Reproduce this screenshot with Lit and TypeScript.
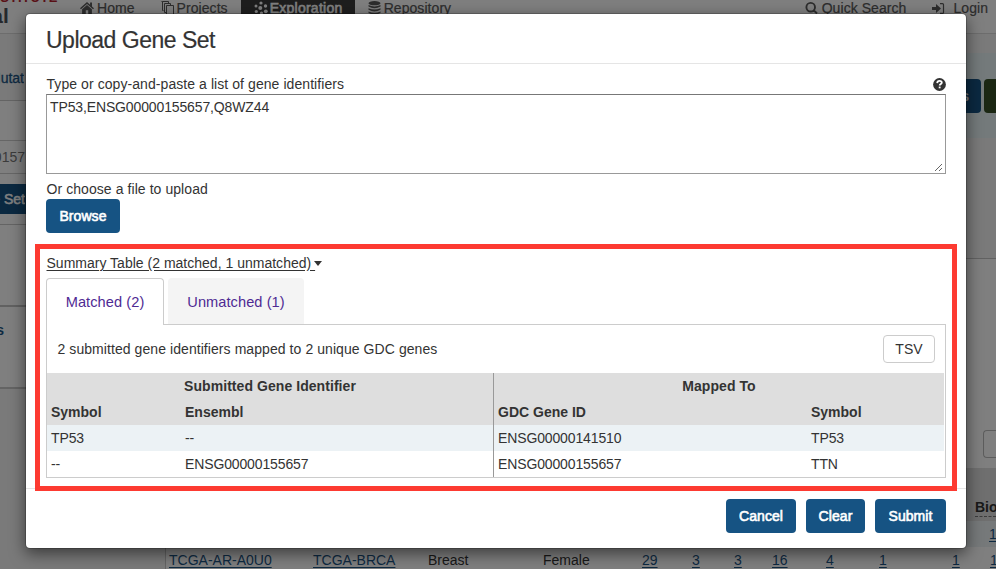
import { LitElement, html, css, svg } from "lit";
import { customElement } from "lit/decorators.js";

const base = css`
  * { box-sizing: border-box; }
  svg { display: block; flex: none; }
`;

const house = svg`<path d="M8 1.200 0 8.200l1.100 1.200L8 3.400l6.900 6L16 8.200l-2.300-2V1.800h-2.200v2.500zM8 4.500 2.400 9.400V15h4.200v-4.300h2.800V15h4.200V9.400z"/>`;

@customElement("site-header")
class SiteHeader extends LitElement {
  static styles = [base, css`
    :host { display: flex; height: 34px; background: #fff; border-bottom: 1px solid #dadada; color: #5a5a5a; font-size: 14px; letter-spacing: 0.06px; overflow: hidden; }
    .brand { width: 65px; height: 33px; position: relative; font-weight: bold; }
    .inst { position: absolute; right: 7px; top: -10px; font-size: 13px; line-height: 16px; letter-spacing: 0.5px; color: #b5232f; }
    .portal { position: absolute; left: -55px; top: 4px; font-size: 21px; line-height: 24px; color: #4a5058; width: 64px; text-align: right; }
    .item { display: flex; align-items: center; height: 33px; padding: 0 15px; margin-top: -9px; gap: 3px; -webkit-text-stroke: 0.2px currentColor; }
    .projects { padding: 0 13px 0 11px; }
    .active { background: #3c3c3c; color: #fff; width: 114px; padding: 0 0 8px 13px; gap: 2px; letter-spacing: 0.25px; -webkit-text-stroke: 0.6px currentColor; height: 42px; }
    .repo { padding: 0 13px; }
    .right { margin-left: auto; display: flex; }
    .search { padding-right: 14px; gap: 4px; }
    .login { padding: 0 8px 0 12px; gap: 8px; }
    svg { fill: currentColor; }
  `];
  render() {
    return html`
      <div class="brand"><span class="inst">INSTITUTE</span><span class="portal">Portal</span></div>
      <div class="item"><svg width="14" height="14" viewBox="0 0 16 16">${house}</svg>Home</div>
      <div class="item projects"><svg width="13" height="14" viewBox="0 0 13 14"><path fill="none" stroke="currentColor" d="M5.500 4.500h7v9h-7zM3.500 11.500v-9h6v1.500M3.500 11.500h1.500M1.500 9.500h1M1.500 9.500v-9h6v1.500M.5 .5h1"/></svg>Projects</div>
      <div class="item active"><svg width="14" height="14" viewBox="0 0 14 14"><circle cx="7" cy="2" r="1.600"/><circle cx="2" cy="5" r="1.500"/><circle cx="6.300" cy="7" r="2"/><circle cx="11.500" cy="5" r="1.700"/><circle cx="2.300" cy="10.500" r="1.600"/><circle cx="7.500" cy="12" r="1.600"/><circle cx="11.800" cy="10.300" r="1.900"/></svg>Exploration</div>
      <div class="item repo"><svg width="13" height="14" viewBox="0 0 13 14"><ellipse cx="6.500" cy="2.200" rx="6" ry="2.100"/><path d="M.5 4q6 2.800 12 0v1.600q-6 3.200-12 0zM.5 7.200q6 2.800 12 0v1.600q-6 3.200-12 0zM.5 10.400q6 2.800 12 0V12q-6 3.200-12 0z"/></svg>Repository</div>
      <div class="right">
        <div class="item search"><svg width="13" height="14" viewBox="0 0 13 14"><path fill="none" stroke="currentColor" stroke-width="1.900" d="M10 6.200a4.300 4.300 0 1 1-8.600 0 4.300 4.300 0 0 1 8.600 0M9 9.500l3 3"/></svg>Quick Search</div>
        <div class="item login"><svg width="13" height="14" viewBox="0 0 13 14"><path d="M0 6h4V3l5 4.500L4 12V9H0z"/><path fill="none" stroke="currentColor" stroke-width="1.200" d="M8 2.600h2.500q1 0 1 1v7.800q0 1-1 1H8"/></svg>Login</div>
      </div>`;
  }
}

@customElement("facet-rail")
class FacetRail extends LitElement {
  static styles = [base, css`
    :host { display: flex; flex-direction: column; width: 165px; height: 535px; background: #f4f4f4; font-size: 14px; overflow: hidden; }
    .tabs { height: 67px; padding-top: 35px; line-height: 18px; border-bottom: 1px solid #c8c8c8; color: #1c5585; -webkit-text-stroke: 0.3px currentColor; }
    .gap { height: 40px; background: #fff; border-bottom: 1px solid #ccc; }
    .field { height: 33px; line-height: 32px; background: #fff; border-bottom: 1px solid #ccc; color: #777; }
    .pad { height: 51px; background: #fff; border-bottom: 1px solid #c8c8c8; padding-top: 10px; }
    .set { height: 30px; line-height: 31px; background: #165383; color: #fff; -webkit-text-stroke: 0.5px currentColor; }
    .block { height: 82px; background: #fff; border-bottom: 2px solid #c2c2c2; flex: none; }
    .next { height: 82px; padding-top: 14px; line-height: 18px; background: #fff; border-bottom: 2px solid #c8c8c8; color: #1c5585; font-weight: bold; }
    .clip { display: flex; justify-content: flex-end; overflow: hidden; white-space: nowrap; width: 25px; }
    .clip.w { width: 24px; }
    .clip.s { width: 4px; }
  `];
  render() {
    return html`
      <div class="tabs"><div class="clip w">Mutat</div></div>
      <div class="gap"></div>
      <div class="field"><div class="clip">00000157</div></div>
      <div class="pad"><div class="set"><div class="clip">Gene Set</div></div></div>
      <div class="block"></div>
      <div class="next"><div class="clip s">Biotypes</div></div>`;
  }
}

const caseRow: [string, number, boolean][] = [
  ["TCGA-AR-A0U0", 144, true], ["TCGA-BRCA", 115, true], ["Breast", 115, false], ["Female", 99, false],
  ["29", 50, true], ["3", 42, true], ["3", 38, true], ["16", 54, true], ["4", 53, true], ["1", 73, true], ["1", 38, true], ["1", 20, true],
];

@customElement("cases-panel")
class CasesPanel extends LitElement {
  static styles = [base, css`
    :host { display: flex; flex-direction: column; flex: 1; min-width: 0; height: 535px; background: #f4f4f4; font-size: 14px; overflow: hidden; color: #333; }
    .bar { height: 85px; margin-top: 19px; background: #e8f5f6; display: flex; justify-content: flex-end; align-items: flex-start; gap: 3px; padding-top: 26px; flex: none; }
    .save { width: 60px; height: 34px; line-height: 34px; border-radius: 4px; background: #165383; color: #fff; text-align: right; padding-right: 12px; font-weight: bold; }
    .more { width: 12px; height: 34px; border-radius: 4px 0 0 4px; background: #364f27; }
    .head { height: 121px; border-bottom: 1px solid #c4c4c4; flex: none; }
    .card { background: #fff; border-left: 1px solid #c8c8c8; flex: 1; display: flex; flex-direction: column; }
    .tools { height: 209px; display: flex; justify-content: flex-end; align-items: flex-end; padding-bottom: 10px; flex: none; }
    .btn { width: 13px; height: 28px; border: 1px solid #bbb; border-right: 0; border-radius: 4px 0 0 4px; }
    .th { height: 53px; background: #dedede; display: flex; justify-content: flex-end; padding-top: 30px; font-weight: bold; flex: none; }
    .th span { width: 21px; height: 19px; line-height: 18px; border-bottom: 1px dashed #777; overflow: hidden; }
    .row { height: 26px; line-height: 26px; display: flex; flex: none; white-space: nowrap; padding-left: 3px; }
    .alt { background: #ecf3f5; justify-content: flex-end; }
    .row span { flex: none; }
    .link { color: #1c5585; text-decoration: underline; text-underline-offset: 2px; }
    .last { width: 7px; }
  `];
  render() {
    return html`
      <div class="bar"><div class="save">Genes</div><div class="more"></div></div>
      <div class="head"></div>
      <div class="card">
        <div class="tools"><div class="btn"></div></div>
        <div class="th"><span>Bio</span></div>
        <div class="row alt"><span class="link last">1</span></div>
        <div class="row">${caseRow.map(([t, w, l]) => html`<span style="width:${w}px"><span class=${l ? "link" : ""}>${t}</span></span>`)}</div>
      </div>`;
  }
}

const matched = [
  ["TP53", "--", "ENSG00000141510", "TP53"],
  ["--", "ENSG00000155657", "ENSG00000155657", "TTN"],
];

@customElement("upload-modal")
class UploadModal extends LitElement {
  static styles = [base, css`
    :host { position: absolute; left: 25px; top: 13px; width: 942px; height: 536px; display: flex; flex-direction: column; background: #fff; background-clip: padding-box; border: 1px solid rgba(0,0,0,.2); border-radius: 5px; box-shadow: 0 5px 15px rgba(0,0,0,.5); font-size: 14px; letter-spacing: 0.07px; color: #333; box-sizing: border-box; line-height: 20px; }
    h2 { margin: 0; height: 50px; padding-left: 20px; font-size: 23px; font-weight: 400; line-height: 52px; letter-spacing: -0.5px; -webkit-text-stroke: 0.2px currentColor; border-bottom: 1px solid #e5e5e5; flex: none; }
    .body { padding: 10px 20px 0; height: 425px; border-bottom: 1px solid #e5e5e5; flex: none; }
    .label { display: flex; justify-content: space-between; align-items: center; height: 20px; padding-left: 0.5px; }
    .area { height: 80px; border: 1px solid #999; border-top-color: #777; padding: 2px 3px; display: flex; justify-content: space-between; letter-spacing: -0.13px; }
    .area svg { align-self: flex-end; margin: 0 -1px -1px 0; }
    .or { margin-top: 5px; padding-left: 0.5px; }
    .btn { height: 34px; line-height: 35px; border-radius: 4px; background: #165383; color: #fff; text-align: center; -webkit-text-stroke: 0.6px #fff; }
    .browse { width: 74px; }
    .cancel { width: 70px; }
    .clear { width: 59px; }
    .submit { width: 71px; }
    .summary { position: relative; margin-top: 20px; }
    .mark { position: absolute; left: -11px; top: -9px; width: 922px; height: 247px; border: 5px solid #fd3a31; }
    .toggle { display: flex; align-items: center; height: 20px; letter-spacing: 0.01px; padding-left: 0.5px; }
    .toggle u { text-underline-offset: 2px; white-space: pre; }
    .caret { border: 4px solid transparent; border-top: 5px solid #333; border-bottom: 0; margin-left: -1px; }
    .tabs { display: flex; margin-top: 5px; gap: 4px; color: #4f2a93; line-height: 46px; text-align: center; font-size: 14.600px; }
    .tab { height: 47px; border: 1px solid #ccc; border-bottom: 0; border-radius: 4px 4px 0 0; background: #fff; width: 118px; margin-bottom: -1px; position: relative; }
    .tab.off { background: #f4f4f4; border-color: #f4f4f4; height: 46px; width: 136px; margin-bottom: 0; }
    .pane { border: 1px solid #ccc; height: 154px; }
    .info { height: 48px; display: flex; align-items: center; justify-content: space-between; padding: 0 10px 0 10.500px; }
    .tsv { width: 52px; height: 28px; line-height: 27px; border: 1px solid #ccc; border-radius: 4px; text-align: center; }
    .grid { display: grid; grid-template-columns: 134px 312px 314px 1fr; grid-auto-rows: 26px; line-height: 26px; margin-right: 1px; letter-spacing: -0.13px; }
    .grid > * { padding-left: 4px; }
    .grid > .h { background: #dedede; font-weight: bold; letter-spacing: 0; }
    .split { border-left: 1px solid #999; }
    .odd { background: #ecf2f5; }
    .wide { grid-column: span 2; }
    .grid > .c { text-align: center; padding-left: 0; letter-spacing: 0.06px; }
    .foot { display: flex; justify-content: flex-end; gap: 10px; padding: 10px 20px; }
  `];
  render() {
    return html`
      <h2>Upload Gene Set</h2>
      <div class="body">
        <div class="label"><span>Type or copy-and-paste a list of gene identifiers</span>
          <svg width="13" height="13" viewBox="0 0 12 12"><circle cx="6" cy="6" r="5.900" fill="#333"/><path d="M3.900 4.700C4 2.900 5 2.600 6 2.600c1.200 0 2.100.6 2.100 1.700C8.100 5.600 6.200 5.600 6.200 7" fill="none" stroke="#fff" stroke-width="1.700"/><path d="M5.300 7.900H7v1.600H5.300z" fill="#fff"/></svg></div>
        <div class="area"><span>TP53,ENSG00000155657,Q8WZ44</span>
          <svg width="9" height="9" viewBox="0 0 9 9"><path d="M1 8 8 1M5 8l3-3" stroke="#555" stroke-width=".9"/></svg></div>
        <div class="or">Or choose a file to upload</div>
        <div class="btn browse">Browse</div>
        <div class="summary">
          <div class="toggle"><u>Summary Table (2 matched, 1 unmatched) </u><span class="caret"></span></div>
          <div class="tabs"><div class="tab">Matched (2)</div><div class="tab off">Unmatched (1)</div></div>
          <div class="pane">
            <div class="info"><span>2 submitted gene identifiers mapped to 2 unique GDC genes</span><span class="tsv">TSV</span></div>
            <div class="grid">
              <div class="h wide c">Submitted Gene Identifier</div><div class="h wide c split">Mapped To</div>
              <div class="h">Symbol</div><div class="h">Ensembl</div><div class="h split">GDC Gene ID</div><div class="h">Symbol</div>
              ${matched.map((r, i) => r.map((c, j) => html`<div class="${i ? "" : "odd"} ${j === 2 ? "split" : ""}">${c}</div>`))}
            </div>
          </div>
          <div class="mark"></div>
        </div>
      </div>
      <div class="foot"><div class="btn cancel">Cancel</div><div class="btn clear">Clear</div><div class="btn submit">Submit</div></div>`;
  }
}

@customElement("app-root")
class AppRoot extends LitElement {
  static styles = [base, css`
    :host { display: block; position: relative; width: 996px; height: 569px; overflow: hidden; font-family: "Liberation Sans", Arial, sans-serif; }
    .main { display: flex; }
    .backdrop { position: absolute; inset: 0; background: rgba(0,0,0,.5); }
  `];
  render() {
    return html`
      <site-header></site-header>
      <div class="main"><facet-rail></facet-rail><cases-panel></cases-panel></div>
      <div class="backdrop"></div>
      <upload-modal></upload-modal>`;
  }
}
